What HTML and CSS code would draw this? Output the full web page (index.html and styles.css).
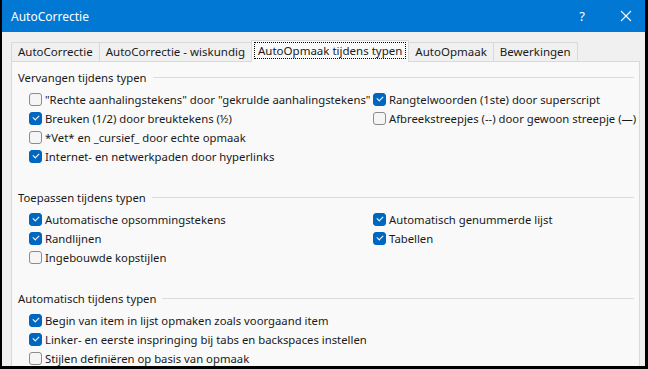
FILE: index.html
```html
<!DOCTYPE html>
<html lang="nl">
<head>
    <meta charset="UTF-8">
    <title>AutoCorrectie</title>
    <link rel="stylesheet" href="styles.css">
</head>
<body>
    <div class="window">
        <div class="titlebar">
            <span class="title">AutoCorrectie</span>
            <span class="title-btn help">?</span>
            <span class="title-btn close">
                <svg width="12" height="12" viewBox="0 0 12 12"><path d="M1 1 L11 11 M11 1 L1 11" stroke="#fff" stroke-width="1.1" fill="none"/></svg>
            </span>
        </div>

        <div class="dialog">
            <div class="tabs">
                <div class="tab">AutoCorrectie</div>
                <div class="tab">AutoCorrectie - wiskundig</div>
                <div class="tab active"><span class="focus">AutoOpmaak tijdens typen</span></div>
                <div class="tab">AutoOpmaak</div>
                <div class="tab">Bewerkingen</div>
            </div>

            <div class="panel">
                <div class="group">
                    <div class="group-title"><span>Vervangen tijdens typen</span></div>
                    <div class="options">
                        <label class="option"><span class="box"></span>"Rechte aanhalingstekens" door "gekrulde aanhalingstekens"</label>
                        <label class="option"><span class="box checked"></span>Rangtelwoorden (1ste) door superscript</label>
                        <label class="option"><span class="box checked"></span>Breuken (1/2) door breuktekens (½)</label>
                        <label class="option"><span class="box"></span>Afbreekstreepjes (--) door gewoon streepje (—)</label>
                        <label class="option"><span class="box"></span>*Vet* en _cursief_ door echte opmaak</label>
                        <span></span>
                        <label class="option"><span class="box checked"></span>Internet- en netwerkpaden door hyperlinks</label>
                    </div>
                </div>

                <div class="group">
                    <div class="group-title"><span>Toepassen tijdens typen</span></div>
                    <div class="options">
                        <label class="option"><span class="box checked"></span>Automatische opsommingstekens</label>
                        <label class="option"><span class="box checked"></span>Automatisch genummerde lijst</label>
                        <label class="option"><span class="box checked"></span>Randlijnen</label>
                        <label class="option"><span class="box checked"></span>Tabellen</label>
                        <label class="option"><span class="box"></span>Ingebouwde kopstijlen</label>
                    </div>
                </div>

                <div class="group">
                    <div class="group-title"><span>Automatisch tijdens typen</span></div>
                    <div class="options single">
                        <label class="option"><span class="box checked"></span>Begin van item in lijst opmaken zoals voorgaand item</label>
                        <label class="option"><span class="box checked"></span>Linker- en eerste inspringing bij tabs en backspaces instellen</label>
                        <label class="option"><span class="box"></span>Stijlen definiëren op basis van opmaak</label>
                    </div>
                </div>
            </div>
        </div>
    </div>
</body>
</html>
```

FILE: styles.css
```css
html, body {
    margin: 0;
    padding: 0;
    background: #000;
    height: 369px;
    overflow: hidden;
}

body {
    font-family: "Noto Sans", "Open Sans", sans-serif;
    font-size: 11.3px;
    color: #1a1a1a;
}

.window {
    margin-left: 2px;
    width: 643px;
    height: 366px;
    background: #f0f0f0;
    display: flex;
    flex-direction: column;
    overflow: hidden;
}

.titlebar {
    height: 32px;
    background: #0078d4;
    color: #fff;
    display: flex;
    align-items: center;
    flex-shrink: 0;
    font-size: 12px;
}

.title {
    margin-left: 9px;
    flex: 1;
}

.title-btn {
    display: flex;
    justify-content: center;
    align-items: center;
    height: 32px;
}

.help {
    width: 46px;
    margin-right: 2px;
    font-size: 13px;
}

.close {
    width: 38px;
}

.dialog {
    flex: 1;
    display: flex;
    flex-direction: column;
    padding: 8px 5px 0 9px;
}

.tabs {
    display: flex;
    padding-left: 1px;
    height: 21px;
    align-items: flex-end;
    position: relative;
    z-index: 1;
    font-size: 11.5px;
}

.tab {
    height: 19px;
    line-height: 18px;
    padding: 0 6px;
    border: 1px solid #d9d9d9;
    border-bottom: none;
    margin-left: -1px;
    background: #f0f0f0;
    box-sizing: border-box;
    white-space: nowrap;
}

.tab.active {
    height: 22px;
    margin-bottom: -1px;
    background: #f9f9f9;
    padding: 2px 3px 0;
    line-height: 16px;
}

.focus {
    display: inline-block;
    outline: 1px dotted #000;
    outline-offset: 0;
    padding: 0 3px;
    line-height: 15px;
}

.panel {
    flex: 1;
    background: #f9f9f9;
    border: 1px solid #d9d9d9;
    border-bottom: none;
    padding: 7px 5px 0 6px;
}

.group {
    margin-bottom: 23px;
}

.group-title {
    display: flex;
    align-items: center;
    height: 18px;
    line-height: 18px;
}

.group-title::after {
    content: "";
    flex: 1;
    height: 1px;
    background: #dcdcdc;
    margin-left: 6px;
    margin-top: -2px;
}

.options {
    display: grid;
    grid-template-columns: 344px 1fr;
    grid-auto-rows: 19px;
    margin-top: 3px;
    padding-left: 11px;
}

.options.single {
    grid-template-columns: 1fr;
}

.option {
    display: flex;
    align-items: center;
    white-space: nowrap;
}

.box {
    width: 13px;
    height: 13px;
    box-sizing: border-box;
    border: 1px solid #8b8b8b;
    border-radius: 3px;
    background: #f5f5f5;
    margin-right: 3px;
    flex-shrink: 0;
    position: relative;
}

.box.checked {
    background: #0067c0;
    border-color: #0067c0;
}

.box.checked::after {
    content: "";
    position: absolute;
    left: 3px;
    top: 2px;
    width: 5px;
    height: 3px;
    border-left: 1px solid #fff;
    border-bottom: 1px solid #fff;
    transform: rotate(-45deg);
}
```
